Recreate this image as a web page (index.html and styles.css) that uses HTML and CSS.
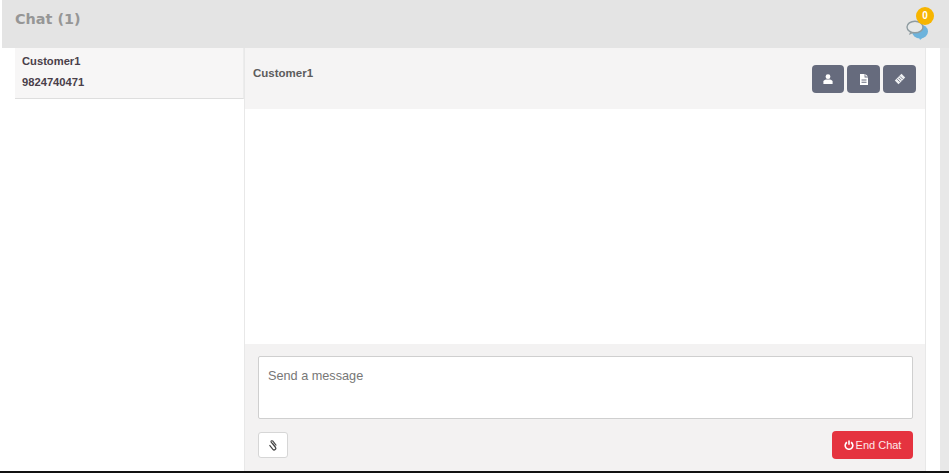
FILE: index.html
```html
<!DOCTYPE html>
<html lang="en">
<head>
<meta charset="utf-8">
<title>Chat</title>
<link rel="stylesheet" href="styles.css">
</head>
<body>
<div class="page">
  <header class="topbar">
    <h1 class="topbar-title">Chat (1)</h1>
    <div class="notify">
      <svg class="notify-icon" width="24" height="20" viewBox="0 0 24 20">
        <ellipse cx="14" cy="11.5" rx="8" ry="7" fill="#6db3dc"/>
        <path d="M13 17l1 3 4-3.5z" fill="#6db3dc"/>
        <ellipse cx="9" cy="7" rx="8" ry="5.8" fill="#e6e8e8" stroke="#8f9ca1" stroke-width="1.4"/>
        <path d="M4 12l-1 3 4-2z" fill="#8f9ca1"/>
      </svg>
      <span class="notify-badge">0</span>
    </div>
  </header>
  <div class="content">
    <aside class="sidebar">
      <div class="contact">
        <div class="contact-line">Customer1</div>
        <div class="contact-line">9824740471</div>
      </div>
    </aside>
    <main class="chat">
      <div class="chat-head">
        <span class="chat-name">Customer1</span>
        <div class="chat-actions">
          <button class="action action-first" type="button" aria-label="Customer">
            <svg width="10" height="10" viewBox="0 0 10 10"><circle cx="5" cy="2.7" r="2.4" fill="#fff"/><path d="M.4 10V7.6C.4 6.2 2 5.6 3 5.4h4c1 .2 2.6.8 2.6 2.2V10z" fill="#fff"/></svg>
          </button>
          <button class="action" type="button" aria-label="File">
            <svg width="10" height="11" viewBox="0 0 10 11"><path d="M1 0h4.6v3.4H9V11H1zM2.5 5.5v1h5v-1zM2.5 7.7v1h5v-1zM6.4 0L9 2.6H6.4z" fill="#fff" fill-rule="evenodd"/></svg>
          </button>
          <button class="action" type="button" aria-label="Ticket">
            <svg width="12" height="12" viewBox="0 0 12 12"><path d="M7.5.8l3.7 3.7-6.7 6.7L.8 7.5z" fill="#eef0f2"/><path d="M6 3.4l2.6 2.6M4.6 4.8l2.6 2.6M3.2 6.2l2.6 2.6" stroke="#666b7d" stroke-width=".8"/></svg>
          </button>
        </div>
      </div>
      <div class="messages"></div>
      <div class="composer">
        <textarea class="composer-input" placeholder="Send a message"></textarea>
        <div class="composer-foot">
          <button class="attach" type="button" aria-label="Attach">
            <svg width="10" height="11" viewBox="0 0 10 11"><path d="M2.8 1.6l4.6 5.7a1.6 1.6 0 0 1-2.5 2L1.5 5.1M4.5 3.4l3 3.7M2.8 1.6a1.2 1.2 0 0 1 1.9-.6l3.6 4.5" fill="none" stroke="#444" stroke-width="1.2"/></svg>
          </button>
          <button class="end" type="button">
            <svg width="10" height="10" viewBox="0 0 10 10"><path d="M3 2.2a3.8 3.8 0 1 0 4 0" fill="none" stroke="#fff" stroke-width="1.6"/><path d="M5 .4v4.4" stroke="#fff" stroke-width="1.6"/></svg>
            <span>End Chat</span>
          </button>
        </div>
      </div>
    </main>
    <div class="gutter"></div>
    <div class="rail"></div>
  </div>
  <div class="rule"></div>
</div>
</body>
</html>
```
FILE: styles.css
```css
* { box-sizing: border-box; }
html, body { margin: 0; height: 100%; overflow: hidden; background: #fff; }
body { font-family: "Liberation Sans", Arial, sans-serif; }
.page { display: flex; flex-direction: column; height: 474px; }
.topbar { height: 48px; flex: none; background: #e4e4e4; display: flex; align-items: center; justify-content: space-between; padding: 0 19px 0 13px; margin-left: 2px; }
.topbar-title { margin: 0 0 10px; font-family: "DejaVu Sans", sans-serif; font-size: 14.4px; font-weight: 700; color: #969696; }
.notify { position: relative; width: 24px; height: 30px; margin-top: 8px; }
.notify-icon { position: absolute; left: 0; top: 7px; }
.notify-badge { position: absolute; left: 10px; top: -6px; width: 18px; height: 18px; border-radius: 50%; background: #f7b500; color: #fff; font-size: 10px; font-weight: 700; text-align: center; line-height: 18px; }
.content { flex: 1; display: flex; min-height: 0; }
.sidebar { width: 244px; flex: none; padding-left: 15px; }
.contact { height: 51px; background: #f7f6f6; border-bottom: 1px solid #dedede; border-right: 1px solid #ececec; padding: 3px 7px; font-size: 11.2px; font-weight: 700; color: #4a3f4a; }
.contact-line { line-height: 21px; }
.chat { width: 682px; flex: none; display: flex; flex-direction: column; border-left: 1px solid #e8e8e8; border-right: 1px solid #e8e8e8; }
.chat-head { height: 61px; flex: none; background: #f5f4f4; display: flex; justify-content: space-between; padding: 17px 9px 0 8px; }
.chat-name { font-size: 11.5px; font-weight: 700; color: #5c5c5c; line-height: 16px; }
.chat-actions { display: flex; gap: 3px; }
.action { width: 33px; height: 28px; border: 0; border-radius: 4px; background: #666b7d; display: flex; align-items: center; justify-content: center; padding: 0; }
.action-first { width: 32px; }
.messages { flex: 1; background: #fff; }
.composer { height: 127px; flex: none; background: #f3f2f2; padding: 12px 12px 0 13px; }
.composer-input { display: block; width: 100%; height: 63px; resize: none; border: 1px solid #cfcfcf; border-radius: 2px; background: #fff; padding: 12px 9px; font: 12.7px "Liberation Sans", Arial, sans-serif; outline: 0; }
.composer-input::placeholder { color: #777; opacity: 1; }
.composer-foot { display: flex; justify-content: space-between; align-items: center; margin-top: 12px; }
.attach { width: 30px; height: 26px; background: #fff; border: 1px solid #d6d6d6; border-radius: 3px; padding: 0; display: flex; align-items: center; justify-content: center; }
.end { width: 81px; height: 28px; background: #e5333f; border: 0; border-radius: 4px; color: #fde9ea; display: flex; align-items: center; justify-content: center; gap: 2px; padding: 0; font: 11px "Liberation Sans", Arial, sans-serif; }
.gutter { width: 14px; flex: none; background: #fff; }
.rail { flex: 1; background: #e8e8e8; }
.rule { height: 2px; flex: none; background: #111; margin-bottom: 1px; }
```
